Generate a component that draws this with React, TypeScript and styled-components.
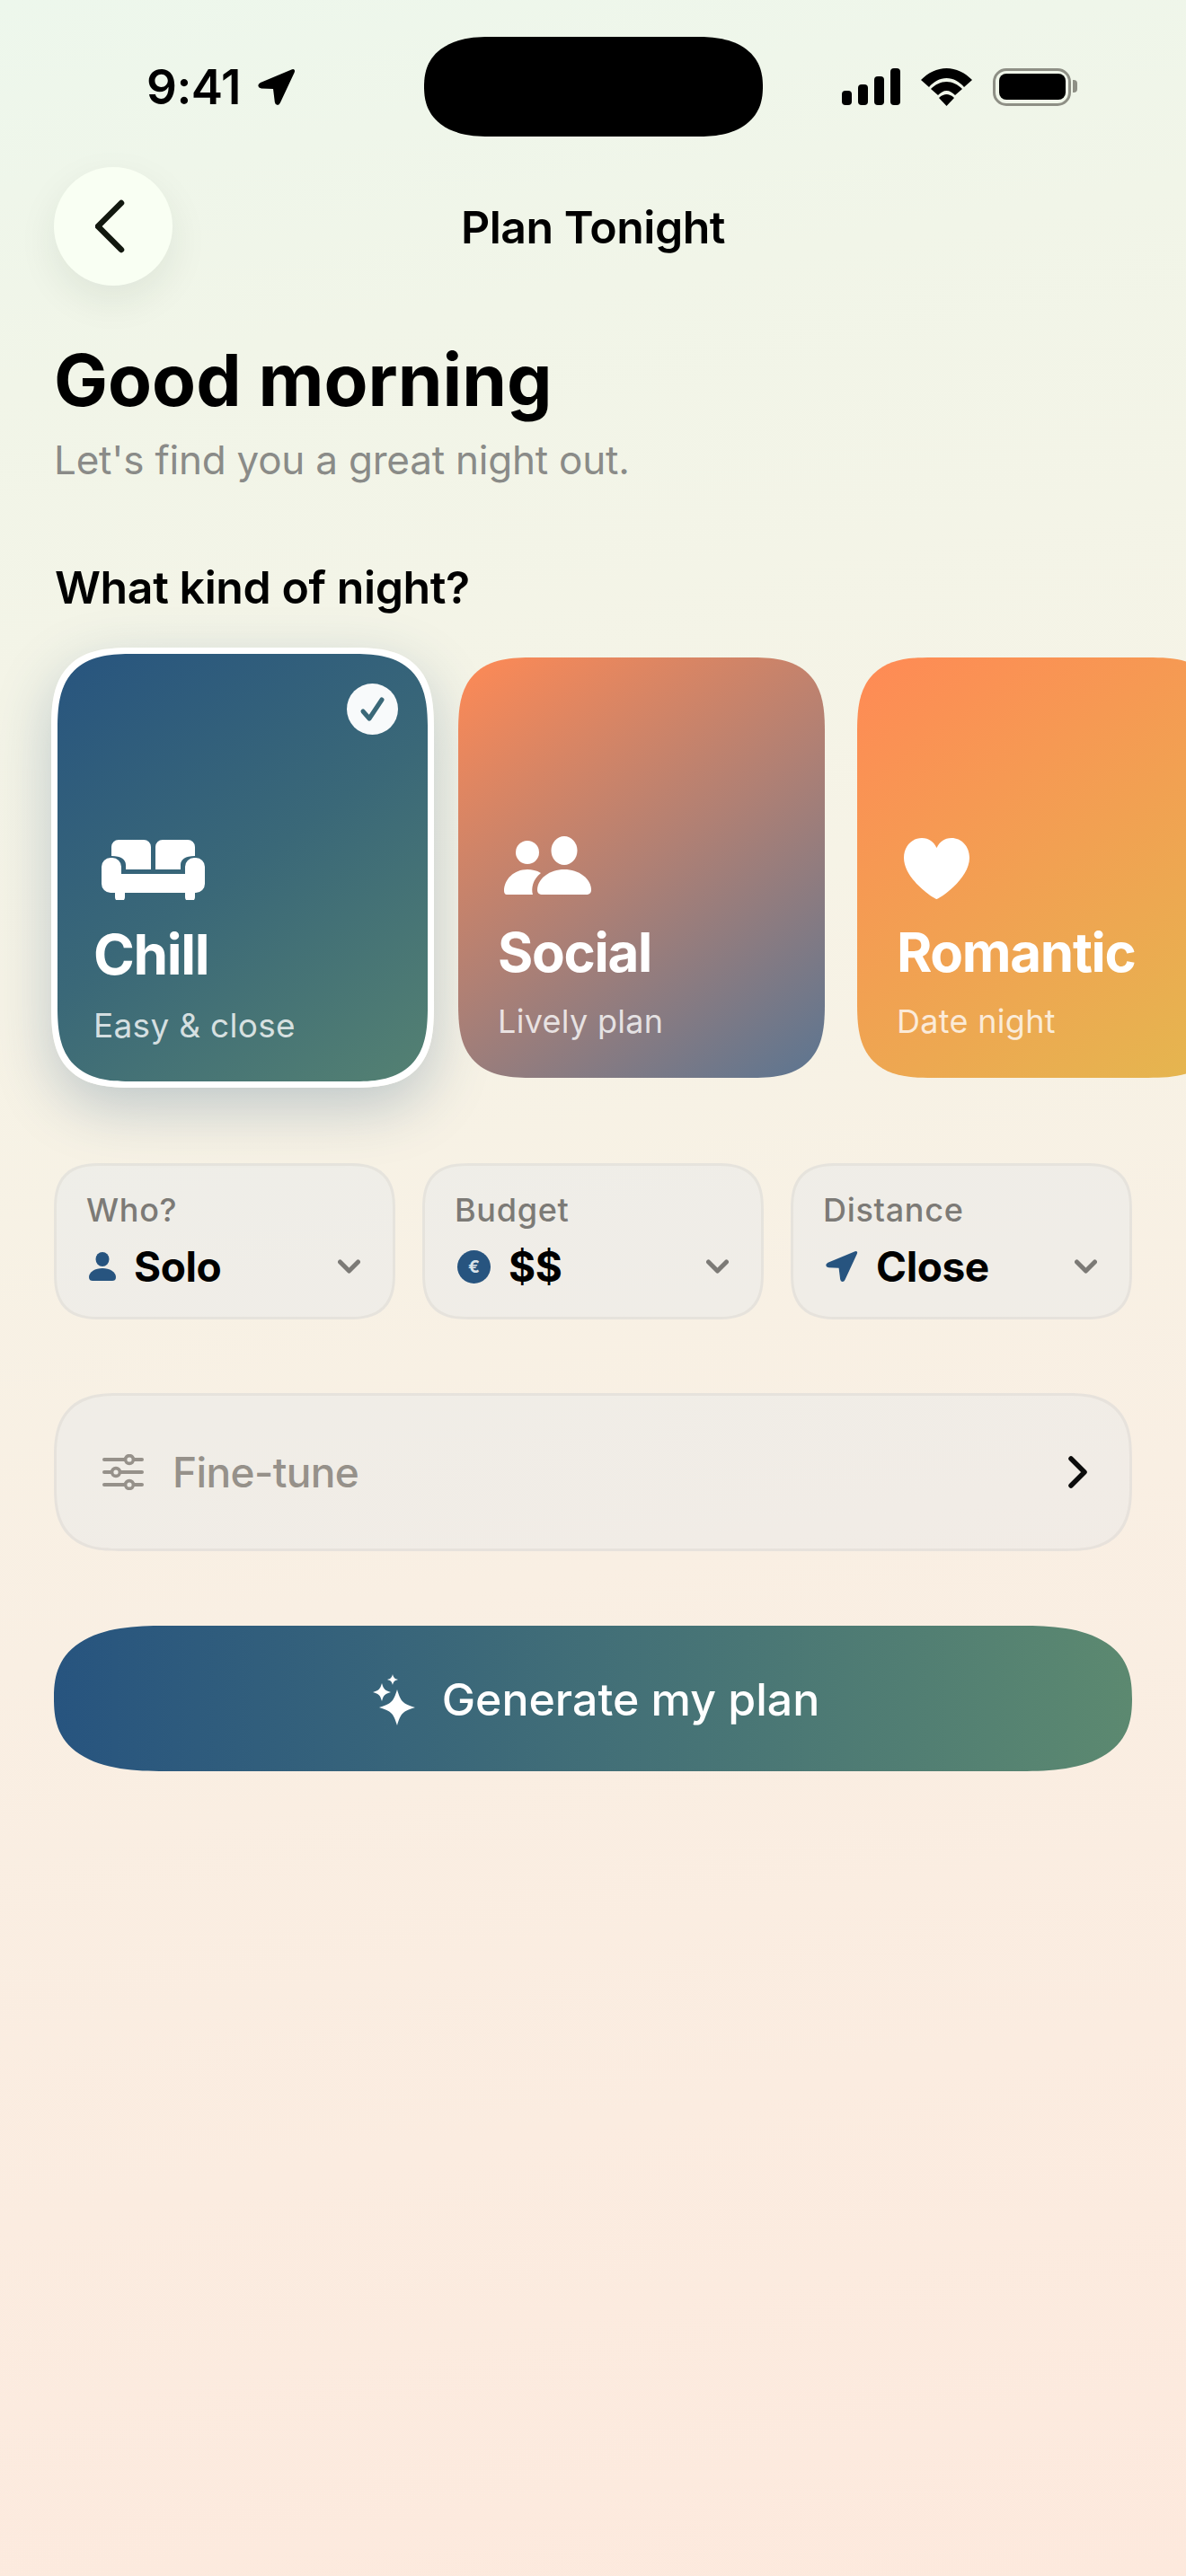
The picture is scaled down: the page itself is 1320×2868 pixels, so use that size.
import React from "react";
import styled, { createGlobalStyle } from "styled-components";

const Global = createGlobalStyle`
  html, body { margin: 0; padding: 0; }
  body { font-family: Inter, "Noto Sans", sans-serif; color: #000; }
`;

const Page = styled.div`
  width: 1320px;
  height: 2868px;
  overflow: hidden;
  box-sizing: border-box;
  background: linear-gradient(170deg, #edf7ec 0%, #f1f5e8 14%, #f6f3e6 36%, #f9efe3 60%, #fde9dd 100%);
`;

const StatusBar = styled.div`
  display: grid;
  grid-template-columns: 1fr 377px 1fr;
  align-items: center;
  padding-top: 41px;
`;

const TimeGroup = styled.div`
  display: flex;
  align-items: center;
  gap: 19px;
  padding-left: 163px;
`;

const Time = styled.span`
  font-size: 53px;
  line-height: 60px;
  font-weight: 600;
  letter-spacing: -0.5px;
`;

const Island = styled.div`
  height: 111px;
  background: #000;
  border-radius: 72px / 55.5px;
  corner-shape: superellipse(1.25);
`;

const StatusIcons = styled.div`
  display: flex;
  align-items: center;
  justify-content: flex-end;
  gap: 23px;
  padding-right: 128px;
`;

const Battery = styled.div`
  position: relative;
  box-sizing: border-box;
  width: 87px;
  height: 42px;
  border: 3.5px solid #8e8f85;
  border-radius: 15px;
  padding: 3.5px;
  &::before {
    content: "";
    display: block;
    height: 100%;
    background: #000;
    border-radius: 8px;
  }
  &::after {
    content: "";
    position: absolute;
    right: -10px;
    top: 10px;
    width: 5px;
    height: 14px;
    background: #8e8f85;
    border-radius: 0 4px 4px 0;
  }
`;

const Header = styled.header`
  display: grid;
  grid-template-columns: 132px 1fr 132px;
  align-items: center;
  margin-top: 34px;
  padding: 0 60px;
`;

const BackButton = styled.button`
  width: 132px;
  height: 132px;
  border: 0;
  padding: 0;
  border-radius: 50%;
  background: #f9fff3;
  box-shadow: 0 16px 44px rgba(30, 50, 40, 0.08);
  display: flex;
  align-items: center;
  justify-content: center;
`;

const Title = styled.h2`
  margin: 2px 0 0;
  text-align: center;
  font-size: 50px;
  line-height: 60px;
  font-weight: 600;
  letter-spacing: -0.5px;
`;

const Greeting = styled.h1`
  margin: 57px 60px 0;
  font-size: 80px;
  line-height: 96px;
  font-weight: 700;
`;

const Sub = styled.p`
  margin: 13px 60px 0;
  font-size: 44px;
  line-height: 56px;
  font-weight: 400;
  letter-spacing: -0.22px;
  color: #8a8b88;
`;

const SectionTitle = styled.h3`
  margin: 84px 60px 0 61px;
  font-size: 50px;
  line-height: 60px;
  font-weight: 600;
  letter-spacing: -0.4px;
`;

const Cards = styled.div`
  display: flex;
  align-items: center;
  gap: 36px;
  margin-top: 37px;
  padding-left: 57px;
`;

const Card = styled.div<{ $bg: string; $selected?: boolean }>`
  position: relative;
  flex: none;
  box-sizing: border-box;
  display: flex;
  flex-direction: column;
  align-items: flex-start;
  justify-content: flex-end;
  color: #fff;
  background: ${(p) => p.$bg};
  background-origin: border-box;
  corner-shape: superellipse(1.5);
  width: ${(p) => (p.$selected ? 426 : 408)}px;
  height: ${(p) => (p.$selected ? 490 : 468)}px;
  margin-right: ${(p) => (p.$selected ? -9 : 0)}px;
  border-radius: ${(p) => (p.$selected ? 92 : 84)}px;
  padding: 0 0 41px 44px;
  ${(p) =>
    p.$selected
      ? "border: 7px solid #fff; padding: 0 0 40px 40px; box-shadow: 0 22px 64px rgba(39, 84, 127, 0.27);"
      : ""}
`;

const CardIcon = styled.div<{ $left?: number; $gap?: number }>`
  display: flex;
  margin-left: ${(p) => p.$left ?? 7}px;
  margin-bottom: ${(p) => p.$gap ?? 28}px;
`;

const CardName = styled.div<{ $selected?: boolean }>`
  font-weight: 700;
  letter-spacing: -1.3px;
  font-size: ${(p) => (p.$selected ? 62 : 60)}px;
  line-height: ${(p) => (p.$selected ? 74 : 72)}px;
`;

const CardSub = styled.div<{ $selected?: boolean }>`
  margin-top: 19px;
  font-weight: 400;
  letter-spacing: 0.3px;
  color: rgba(255, 255, 255, 0.78);
  font-size: ${(p) => (p.$selected ? 37 : 36)}px;
  line-height: ${(p) => (p.$selected ? 45 : 44)}px;
`;

const Check = styled.div`
  position: absolute;
  top: 33px;
  right: 33px;
  width: 57px;
  height: 57px;
  border-radius: 50%;
  background: #f8fafb;
  display: flex;
  align-items: center;
  justify-content: center;
`;

const Selects = styled.div`
  display: grid;
  grid-template-columns: repeat(3, 380px);
  gap: 30px;
  margin: 84px 60px 0;
`;

const Select = styled.div`
  box-sizing: border-box;
  height: 174px;
  padding: 27px 36px 0 33px;
  border: 3px solid rgba(70, 60, 50, 0.055);
  border-radius: 52px;
  corner-shape: superellipse(1.4);
  background: rgba(208, 226, 244, 0.2);
`;

const SelectLabel = styled.div`
  font-size: 36px;
  line-height: 44px;
  font-weight: 500;
  letter-spacing: 0.7px;
  color: #7c7a76;
`;

const SelectValue = styled.div`
  display: flex;
  align-items: center;
  gap: 20px;
  margin-top: 13px;
  font-size: 46px;
  line-height: 56px;
  font-weight: 700;
  letter-spacing: -0.4px;
`;

const ValueIcon = styled.span`
  display: flex;
  margin-left: 3px;
`;

const ChevronSlot = styled.span`
  display: flex;
  margin-left: auto;
`;

const Coin = styled.span`
  width: 37px;
  height: 37px;
  border-radius: 50%;
  background: #27547f;
  color: #d9e3ea;
  font-size: 19px;
  line-height: 37px;
  font-weight: 700;
  letter-spacing: 0;
  text-align: center;
`;

const FineTune = styled.div`
  box-sizing: border-box;
  display: flex;
  align-items: center;
  gap: 32px;
  height: 176px;
  margin: 82px 60px 0;
  padding: 0 47px 0 51px;
  border: 3px solid rgba(70, 60, 50, 0.055);
  border-radius: 72px;
  corner-shape: superellipse(1.4);
  background: rgba(208, 226, 244, 0.2);
`;

const FineTuneLabel = styled.span`
  flex: 1;
  font-size: 46px;
  line-height: 56px;
  font-weight: 500;
  letter-spacing: -0.6px;
  color: #96918a;
`;

const Generate = styled.button`
  box-sizing: border-box;
  display: flex;
  align-items: center;
  justify-content: center;
  gap: 30px;
  width: 1200px;
  height: 162px;
  margin: 83px 60px 0;
  padding: 2px 0 0 7px;
  border: 0;
  border-radius: 123px / 81px;
  corner-shape: superellipse(1.38);
  background: linear-gradient(90deg, #27547f 0%, #5c8970 100%);
  color: #fff;
  font-family: inherit;
  font-size: 50px;
  line-height: 60px;
  font-weight: 500;
`;

const ARROW = "M33.5 1.2 L2.5 14.2 Q0 15.5 0.3 17.5 Q0.7 19.6 3.4 19.8 L15 20.3 L16.6 33.2 Q17 35.7 19 36 Q21 36.2 22 33.8 L35.8 4.2 Q36.6 2.4 35.8 1.6 Q35 0.6 33.5 1.2Z";

const star = (cx: number, cy: number, r: number, k = 0.2) => {
  const a = r * k;
  return `M${cx} ${cy - r}C${cx + a} ${cy - a * 1.6} ${cx + a * 1.6} ${cy - a} ${cx + r} ${cy}C${cx + a * 1.6} ${cy + a} ${cx + a} ${cy + a * 1.6} ${cx} ${cy + r}C${cx - a} ${cy + a * 1.6} ${cx - a * 1.6} ${cy + a} ${cx - r} ${cy}C${cx - a * 1.6} ${cy - a} ${cx - a} ${cy - a * 1.6} ${cx} ${cy - r}Z`;
};

const ChevronDown = () => (
  <svg width="25" height="16" viewBox="0 0 25 16" fill="none" stroke="#7c7a76" strokeWidth="5" strokeLinecap="round" strokeLinejoin="round">
    <path d="M2.5 3 L12.5 13 L22.5 3" />
  </svg>
);

const Sofa = () => (
  <svg width="115" height="67" viewBox="0 0 115 67" fill="#fff">
    <path d="M19 0H47a8 8 0 0 1 8 8V33H27V28C27 22 22 18 11 18V8a8 8 0 0 1 8-8Z" />
    <path d="M96 0H68a8 8 0 0 0-8 8V33H88V28C88 22 93 18 104 18V8a8 8 0 0 0-8-8Z" />
    <path d="M0 30a10 10 0 0 1 10-10h2a10 10 0 0 1 10 10v8h71v-8a10 10 0 0 1 10-10h2a10 10 0 0 1 10 10v19a10 10 0 0 1-10 10h-1v5a5 5 0 0 1-5 5h-1a5 5 0 0 1-5-5v-5H26v5a5 5 0 0 1-5 5h-1a5 5 0 0 1-5-5v-5h-5a10 10 0 0 1-10-10Z" />
  </svg>
);

const People = () => (
  <svg width="97" height="65" viewBox="0 0 97 65" fill="#fff">
    <ellipse cx="67" cy="16" rx="14.5" ry="16" />
    <path d="M43 65H91C95 65 97 63 97 60C97 47 83 37 67 37C51 37 37 47 37 60C37 63 39 65 43 65Z" />
    <circle cx="26" cy="18" r="13" />
    <path d="M3 65H32C30 58 32 48 41 41C36 38 31 37 26 37C11 37 0 48 0 61C0 63 1 65 3 65Z" />
  </svg>
);

const Heart = () => (
  <svg width="73" height="68" viewBox="0 0 73 68" fill="#fff">
    <path d="M36.5 68C34 68 0 46 0 22C0 9 9 0 20 0C28 0 33 4 36.5 11C40 4 45 0 53 0C64 0 73 9 73 22C73 46 39 68 36.5 68Z" />
  </svg>
);

export default function App() {
  return (
    <Page>
      <Global />
      <StatusBar>
        <TimeGroup>
          <Time>9:41</Time>
          <svg width="42" height="42" viewBox="0 0 37 37" fill="#000"><path d={ARROW} /></svg>
        </TimeGroup>
        <Island />
        <StatusIcons>
          <svg width="65" height="41" viewBox="0 0 65 41" fill="#000">
            <rect x="0" y="25" width="11" height="16" rx="4" />
            <rect x="18" y="18" width="11" height="23" rx="4" />
            <rect x="36" y="9" width="11" height="32" rx="4" />
            <rect x="54" y="0" width="11" height="41" rx="4" />
          </svg>
          <svg width="57" height="42" viewBox="0 0 57 42" fill="#000">
            <path d="M0 13C8 5 18 0 28.5 0C39 0 49 5 57 13L48 21C43 15 36 11 28.5 11C21 11 14 15 9 21Z" />
            <path d="M11 23C16 18 22 15 28.5 15C35 15 41 18 46 23L38 30C35 27 32 25 28.5 25C25 25 22 27 19 30Z" />
            <path d="M20 33C23 30 26 29 28.5 29C31 29 34 30 37 33L28.5 42Z" />
          </svg>
          <Battery />
        </StatusIcons>
      </StatusBar>

      <Header>
        <BackButton aria-label="Back">
          <svg width="40" height="64" viewBox="0 0 40 64" fill="none" stroke="#12180f" strokeWidth="6.5" strokeLinecap="round" strokeLinejoin="round">
            <path d="M32 6 L6 32 L32 58" transform="translate(-3 0)" />
          </svg>
        </BackButton>
        <Title>Plan Tonight</Title>
      </Header>

      <Greeting>Good morning</Greeting>
      <Sub>Let's find you a great night out.</Sub>
      <SectionTitle>What kind of night?</SectionTitle>

      <Cards>
        <Card $selected $bg="linear-gradient(145deg, #27547f 0%, #3a6878 50%, #558272 100%)">
          <Check>
            <svg width="30" height="30" viewBox="0 0 30 30" fill="none" stroke="#3a6878" strokeWidth="5" strokeLinecap="round" strokeLinejoin="round">
              <path d="M4 17 L11 25 L25 4" />
            </svg>
          </Check>
          <CardIcon $left={9} $gap={24}><Sofa /></CardIcon>
          <CardName $selected>Chill</CardName>
          <CardSub $selected>Easy &amp; close</CardSub>
        </Card>
        <Card $bg="linear-gradient(145deg, #ff8a55 0%, #b08074 50%, #5b7591 100%)">
          <CardIcon><People /></CardIcon>
          <CardName>Social</CardName>
          <CardSub>Lively plan</CardSub>
        </Card>
        <Card $bg="linear-gradient(145deg, #ff8a55 0%, #e4b74f 100%)">
          <CardIcon $left={8} $gap={23}><Heart /></CardIcon>
          <CardName>Romantic</CardName>
          <CardSub>Date night</CardSub>
        </Card>
      </Cards>

      <Selects>
        <Select>
          <SelectLabel>Who?</SelectLabel>
          <SelectValue>
            <ValueIcon>
              <svg width="30" height="32" viewBox="0 0 30 32" fill="#27547f">
                <ellipse cx="15" cy="8" rx="7.5" ry="8" />
                <path d="M0 28C0 22 7 18 15 18C23 18 30 22 30 28C30 31 28 32 26 32H4C2 32 0 31 0 28Z" />
              </svg>
            </ValueIcon>
            <span>Solo</span>
            <ChevronSlot><ChevronDown /></ChevronSlot>
          </SelectValue>
        </Select>
        <Select>
          <SelectLabel>Budget</SelectLabel>
          <SelectValue>
            <ValueIcon><Coin>€</Coin></ValueIcon>
            <span>$$</span>
            <ChevronSlot><ChevronDown /></ChevronSlot>
          </SelectValue>
        </Select>
        <Select>
          <SelectLabel>Distance</SelectLabel>
          <SelectValue>
            <ValueIcon>
              <svg width="36" height="36" viewBox="0 0 37 37" fill="#27547f"><path d={ARROW} /></svg>
            </ValueIcon>
            <span>Close</span>
            <ChevronSlot><ChevronDown /></ChevronSlot>
          </SelectValue>
        </Select>
      </Selects>

      <FineTune>
        <svg width="46" height="40" viewBox="0 0 46 40" fill="none" stroke="#96918a" strokeWidth="3.6" strokeLinecap="round">
          <path d="M2 6H44M2 20H44M2 34H44" strokeWidth="4" />
          <circle cx="30" cy="6" r="4.4" fill="#f0eee8" />
          <circle cx="15" cy="20" r="4.4" fill="#f0eee8" />
          <circle cx="30" cy="34" r="4.4" fill="#f0eee8" />
        </svg>
        <FineTuneLabel>Fine-tune</FineTuneLabel>
        <svg width="21" height="36" viewBox="0 0 21 36" fill="none" stroke="#0c0c0c" strokeWidth="5.5" strokeLinecap="round" strokeLinejoin="round">
          <path d="M3 3 L18 18 L3 33" />
        </svg>
      </FineTune>

      <Generate>
        <svg width="47" height="57" viewBox="0 0 47 57" fill="#fff">
          <path d={star(27, 37, 20)} />
          <path d={star(10, 20, 10)} />
          <path d={star(22, 6, 6)} />
        </svg>
        <span>Generate my plan</span>
      </Generate>
    </Page>
  );
}
